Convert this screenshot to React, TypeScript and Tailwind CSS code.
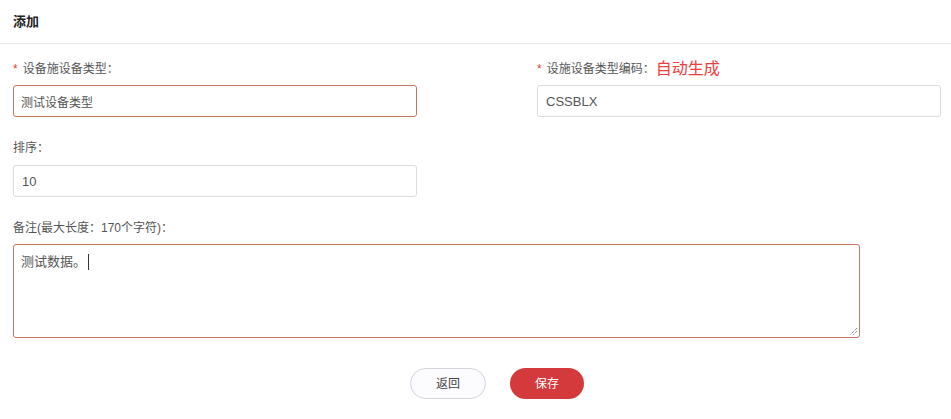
import React from "react";

const font = "font-['Liberation_Sans','Noto_Sans_CJK_SC',sans-serif]";

function Label({ required, children }: { required?: boolean; children: React.ReactNode }) {
  return (
    <div className="flex items-center h-[20px] text-[12px] text-[#555]">
      {required && <span className="text-[#e8412c] mr-[5px] text-[12px]">*</span>}
      {children}
    </div>
  );
}

export default function App() {
  return (
    <div className={`w-[951px] h-[419px] bg-white ${font}`}>
      {/* header */}
      <div className="h-[44px] border-b border-[#e8e8e8] flex items-center pl-[13px]">
        <span className="text-[13px] font-bold text-[#222]">添加</span>
      </div>

      <div className="pl-[13px]">
        <div className="grid grid-cols-[404px_404px] gap-x-[120px] pt-[15px]">
          <div className="flex flex-col">
            <Label required>设备施设备类型：</Label>
            <input
              defaultValue="测试设备类型"
              className="mt-[6px] h-[32px] w-full rounded-[3px] border border-[#c87565] px-[7px] text-[12px] text-[#555] outline-none"
            />
          </div>
          <div className="flex flex-col">
            <Label required>
              设施设备类型编码：
              <span className="text-[16px] text-[#ef3c3c] ml-[1px]">自动生成</span>
            </Label>
            <input
              defaultValue="CSSBLX"
              className="mt-[6px] h-[32px] w-full rounded-[3px] border border-[#dcdcdc] px-[8px] text-[13px] text-[#555] outline-none"
            />
          </div>
        </div>

        <div className="flex flex-col w-[404px] mt-[21px]">
          <Label>排序：</Label>
          <input
            defaultValue="10"
            className="mt-[7px] h-[32px] w-full rounded-[3px] border border-[#dcdcdc] px-[8px] text-[13px] text-[#555] outline-none"
          />
        </div>

        <div className="flex flex-col w-[847px] mt-[21px]">
          <Label>备注(最大长度：170个字符)：</Label>
          <div className="relative mt-[6px] h-[94px] rounded-[3px] border border-[#c87565] px-[7px] pt-[4px]">
            <span className="text-[13px] text-[#555]">测试数据。</span>
            <span className="inline-block w-[1px] h-[16px] bg-[#333] align-middle ml-[2px]" />
            <svg className="absolute right-[1px] bottom-[1px]" width="9" height="9" viewBox="0 0 9 9">
              <path d="M8 1 L1 8 M8 4 L4 8" stroke="#555" strokeWidth="1" strokeDasharray="1 1" />
            </svg>
          </div>
        </div>

        <div className="flex gap-[24px] mt-[30px] ml-[397px]">
          <button className="w-[76px] h-[31px] rounded-full border border-[#d5d3de] bg-[#fcfbfe] text-[12px] text-[#444]">
            返回
          </button>
          <button className="w-[74px] h-[31px] rounded-full bg-[#d43a3b] text-[12px] text-white">
            保存
          </button>
        </div>
      </div>
    </div>
  );
}
